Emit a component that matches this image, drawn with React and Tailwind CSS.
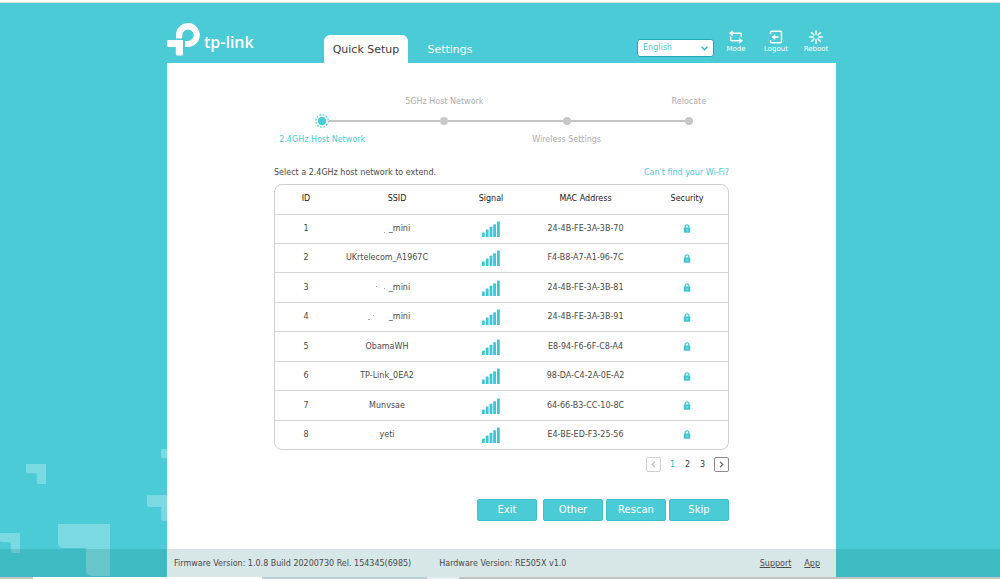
import { useState } from 'react';

const NETWORKS = [
  { id: 1, ssid: '_mini', marks: [[20, 8, 1]], mac: '24-4B-FE-3A-3B-70' },
  { id: 2, ssid: 'UKrtelecom_A1967C', mac: 'F4-B8-A7-A1-96-7C' },
  { id: 3, ssid: '_mini', marks: [[12, 3, 1], [20, 5, 1]], mac: '24-4B-FE-3A-3B-81' },
  { id: 4, ssid: '_mini', marks: [[4, 7, 2], [9, 3, 1]], mac: '24-4B-FE-3A-3B-91' },
  { id: 5, ssid: 'ObamaWH', mac: 'E8-94-F6-6F-C8-A4' },
  { id: 6, ssid: 'TP-Link_0EA2', mac: '98-DA-C4-2A-0E-A2' },
  { id: 7, ssid: 'Munvsae', mac: '64-66-B3-CC-10-8C' },
  { id: 8, ssid: 'yeti', mac: 'E4-BE-ED-F3-25-56' },
];

const STEPS = [
  { label: '2.4GHz Host Network', above: false },
  { label: '5GHz Host Network', above: true },
  { label: 'Wireless Settings', above: false },
  { label: 'Relocate', above: true },
];

function Logo() {
  return (
    <a href="#home" className="flex items-center gap-1 text-white">
      <svg width="33" height="33" viewBox="0 0 33 33" fill="currentColor" aria-hidden="true">
        <path d="M9 15.4V11a11.9 11.9 0 1 1 12 12.9h-3V18h3a5.700 5.700 0 1 0-5.700-5.700v1.700a1.400 1.400 0 0 1-1.400 1.400z" />
        <path d="M1.400 17.100H16v14.100a1.400 1.400 0 0 1-1.400 1.400h-4.400a1.400 1.400 0 0 1-1.400-1.400v-7.300H1.400A1.400 1.400 0 0 1 0 22.500v-4a1.400 1.400 0 0 1 1.400-1.400z" />
      </svg>
      <span className="pt-1 font-['Open_Sans',sans-serif] text-[16px] leading-5 font-semibold">tp-link</span>
    </a>
  );
}

function ModeIcon() {
  return (
    <svg width="16" height="14" viewBox="0 0 16 14" fill="none" stroke="currentColor" strokeWidth="1.500" strokeLinejoin="round" strokeLinecap="round">
      <path d="M4 3.200h8.300a1 1 0 0 1 1 1v2.600" />
      <path d="M12 10.800H3.700a1 1 0 0 1-1-1V7.200" />
      <path d="M4.200.900 1.400 3.200l2.800 2.300zM11.800 8.500l2.800 2.300-2.800 2.300z" fill="currentColor" strokeWidth="0.600" />
    </svg>
  );
}

function LogoutIcon() {
  return (
    <svg width="14" height="14" viewBox="0 0 14 14" fill="none" stroke="currentColor" strokeWidth="1.500">
      <path d="M1.500 4V2.600a1.400 1.400 0 0 1 1.400-1.400h8.200a1.400 1.400 0 0 1 1.400 1.400v8.800a1.400 1.400 0 0 1-1.400 1.400H2.900a1.400 1.400 0 0 1-1.400-1.400V10" />
      <path d="M5 7h4.500" />
      <path d="M6 4.600 3 7l3 2.400z" fill="currentColor" strokeWidth="0.500" />
    </svg>
  );
}

function RebootIcon() {
  return (
    <svg width="14" height="14" viewBox="0 0 14 14" fill="none" stroke="currentColor" strokeWidth="1.500" strokeLinecap="round">
      <path d="M7 .8v3.400M7 9.800v3.400M.8 7h3.400M9.800 7h3.400M2.600 2.600l2.400 2.400M9 9l2.400 2.400M11.400 2.600 9 5M5 9l-2.400 2.400" />
    </svg>
  );
}

function SignalIcon() {
  return (
    <svg width="18" height="16" viewBox="0 0 18 16" fill="#3fc6d3" role="img" aria-label="Strong signal" className="mx-auto">
      <rect x="0" y="11.500" width="2.800" height="4.500" rx="0.500" />
      <rect x="3.800" y="8.500" width="2.800" height="7.500" rx="0.500" />
      <rect x="7.600" y="5.800" width="2.800" height="10.200" rx="0.500" />
      <rect x="11.200" y="3.200" width="2.800" height="12.800" rx="0.500" />
      <rect x="15" y="0.500" width="2.800" height="15.500" rx="0.500" />
    </svg>
  );
}

function LockIcon() {
  return (
    <svg width="8" height="9" viewBox="0 0 8 9" fill="none" role="img" aria-label="Secured" className="mx-auto">
      <path d="M2.100 4V2.700a1.900 1.900 0 0 1 3.800 0V4" stroke="#4acbd6" strokeWidth="1.300" />
      <rect x="0.800" y="3.600" width="6.400" height="5.200" rx="0.700" fill="#3fc6d3" />
      <path d="M4 5.300v1.800" stroke="#fff" strokeOpacity="0.700" strokeWidth="0.900" />
    </svg>
  );
}

function Corner({ className }) {
  return (
    <svg viewBox="0 0 52 52" fill="#fff" fillOpacity="0.270" className={className} aria-hidden="true">
      <path d="M0 0h52v52H33a5 5 0 0 1-5-5V24H5a5 5 0 0 1-5-5z" />
    </svg>
  );
}

function Header() {
  const actions = [
    { label: 'Mode', Icon: ModeIcon },
    { label: 'Logout', Icon: LogoutIcon },
    { label: 'Reboot', Icon: RebootIcon },
  ];

  return (
    <header className="flex h-15 items-end">
      <div className="w-[157px] pb-[7px]">
        <Logo />
      </div>
      <nav className="flex items-end text-[11px] leading-[26px]">
        <a href="#quick" className="w-21 rounded-t-md bg-white pt-[2px] text-center text-[#3c3c3c]">Quick Setup</a>
        <a href="#settings" className="w-21 text-center text-white">Settings</a>
      </nav>
      <div className="ml-auto flex items-center pb-[6px]">
        <div className="relative mt-3 mr-[2px]">
          <select
            aria-label="Language"
            defaultValue="English"
            className="block h-[18px] w-[77px] appearance-none rounded-[3px] border border-[#1fa9b5] bg-white pl-[5px] text-[8px] leading-4 text-[#4acbd6]"
          >
            <option>English</option>
          </select>
          <svg width="7" height="5" viewBox="0 0 7 5" fill="none" stroke="#2fb9c6" strokeWidth="1.500" className="pointer-events-none absolute top-[7px] right-[6px]">
            <path d="M.6.800 3.500 3.700 6.400.800" />
          </svg>
        </div>
        {actions.map(({ label, Icon }) => (
          <button key={label} type="button" className="flex w-10 flex-col items-center gap-px text-[7px] leading-[9px] text-white">
            <Icon />
            {label}
          </button>
        ))}
      </div>
    </header>
  );
}

function Stepper() {
  return (
    <ol className="grid grid-cols-4 pr-[86px] pl-[94px] text-center leading-3">
      {STEPS.map((step, i) => (
        <li key={step.label} className={`grid grid-rows-[12px_26px_12px] ${i === 0 ? 'text-[#4acbd6]' : 'text-[#acacac]'}`}>
          <span>{step.above && step.label}</span>
          <span className="flex items-center">
            <span className={`h-[2px] flex-1 ${i === 0 ? '' : 'bg-[#c4c4c4]'}`} />
            {i === 0 ? (
              <svg width="14" height="14" viewBox="0 0 14 14">
                <circle cx="7" cy="7" r="4.200" fill="#4acbd6" />
                <circle cx="7" cy="7" r="6.200" fill="none" stroke="#4acbd6" strokeWidth="1.300" strokeDasharray="1.600 1.646" />
              </svg>
            ) : (
              <span className="size-2 rounded-full bg-[#c8c8c8]" />
            )}
            <span className={`h-[2px] flex-1 ${i === STEPS.length - 1 ? '' : 'bg-[#c4c4c4]'}`} />
          </span>
          <span>{!step.above && step.label}</span>
        </li>
      ))}
    </ol>
  );
}

function NetworkTable() {
  return (
    <div className="rounded-lg border border-[#cfcfcf]">
      <table className="h-[264px] w-full table-fixed border-collapse text-center text-[#4a4a4a]">
        <thead className="text-[#222]">
          <tr className="h-[29px]">
            <th className="w-[62px] font-normal">ID</th>
            <th className="w-[120px] font-normal">SSID</th>
            <th className="w-[68px] font-normal">Signal</th>
            <th className="w-[121px] font-normal">MAC Address</th>
            <th className="font-normal">Security</th>
          </tr>
        </thead>
        <tbody>
          {NETWORKS.map((n) => (
            <tr key={n.id} className="border-t border-[#d4d4d4]">
              <td>{n.id}</td>
              <td className="pr-5">
                <span className="flex items-center justify-center">
                  {n.marks && (
                    <svg width="25" height="10" viewBox="0 0 25 10" fill="#a4acb6" aria-hidden="true">
                      {n.marks.map(([x, y, size]) => (
                        <rect key={x} x={x} y={y} width={size} height="1" />
                      ))}
                    </svg>
                  )}
                  {n.ssid}
                </span>
              </td>
              <td><SignalIcon /></td>
              <td>{n.mac}</td>
              <td><LockIcon /></td>
            </tr>
          ))}
        </tbody>
      </table>
    </div>
  );
}

function Pager() {
  const [page, setPage] = useState(1);
  const arrow = 'flex size-[15px] items-center justify-center rounded-[2px] border';

  return (
    <div className="flex items-center justify-end text-[#3c3c3c]">
      <button
        type="button"
        aria-label="Previous page"
        onClick={() => setPage(Math.max(1, page - 1))}
        className={`${arrow} mr-1 ${page === 1 ? 'border-[#cfcfcf] text-[#bdbdbd]' : 'border-[#8c8c8c] text-[#6a6a6a]'}`}
      >
        <svg width="5" height="7" viewBox="0 0 5 7" fill="none" stroke="currentColor" strokeWidth="1.200"><path d="M4 .8 1.200 3.500 4 6.200" /></svg>
      </button>
      {[1, 2, 3].map((n) => (
        <button key={n} type="button" onClick={() => setPage(n)} className={`w-[15px] ${n === page ? 'text-[#2fbfcc]' : ''}`}>
          {n}
        </button>
      ))}
      <button
        type="button"
        aria-label="Next page"
        onClick={() => setPage(Math.min(3, page + 1))}
        className={`${arrow} ml-1 ${page === 3 ? 'border-[#cfcfcf] text-[#bdbdbd]' : 'border-[#8c8c8c] text-[#6a6a6a]'}`}
      >
        <svg width="5" height="7" viewBox="0 0 5 7" fill="none" stroke="currentColor" strokeWidth="1.200"><path d="M1 .8 3.800 3.500 1 6.200" /></svg>
      </button>
    </div>
  );
}

export default function App() {
  return (
    <div className="relative flex min-h-screen flex-col overflow-hidden bg-[#4acbd6] font-['DejaVu_Sans',sans-serif] text-[8px] leading-3">
      <div className="h-[3px] border-b border-[#d5dfe2] bg-white" />

      {/* Background pattern */}
      <Corner className="absolute bottom-[95px] left-[26px] size-5" />
      <Corner className="absolute bottom-[26px] left-0 size-5" />
      <Corner className="absolute bottom-[3px] left-[58px] size-[52px]" />
      <Corner className="absolute bottom-[58px] left-[147px] size-[26px]" />
      <Corner className="absolute bottom-[110px] left-[161px] size-5" />

      <div className="relative flex flex-1 justify-center pl-[3px]">
        <div className="flex w-full max-w-[669px] flex-col">
          <Header />
          <main className="flex-1 bg-white pt-[33px] pb-[56px]">
            <Stepper />
            <div className="px-[107px] pt-[21px]">
              <div className="mb-[5px] flex justify-between">
                <p className="text-[#4a4a4a]">Select a 2.4GHz host network to extend.</p>
                <a href="#help" className="text-[#4acbd6]">Can&apos;t find your Wi-Fi?</a>
              </div>
              <NetworkTable />
              <div className="mt-[7px]">
                <Pager />
              </div>
              <div className="mt-[27px] flex justify-end gap-[3px]">
                {['Exit', 'Other', 'Rescan', 'Skip'].map((label) => (
                  <button
                    key={label}
                    type="button"
                    className="h-[22px] w-[60px] rounded-[2px] border border-[#3cc0cc] bg-[#4acbd6] text-[10px] text-white first:mr-[3px]"
                  >
                    {label}
                  </button>
                ))}
              </div>
            </div>
          </main>
        </div>
      </div>

      <footer className="absolute inset-x-0 bottom-0">
        <div className="flex justify-center bg-[rgba(0,94,94,0.155)] pl-[3px]">
          <div className="flex h-7 w-full max-w-[669px] items-center pt-[2px] pr-4 pl-[7px] text-[#4a4a4a]">
            <span className="mr-[28px]">Firmware Version: 1.0.8 Build 20200730 Rel. 154345(6985)</span>
            <span>Hardware Version: RE505X v1.0</span>
            <a href="#support" className="ml-auto underline">Support</a>
            <a href="#app" className="ml-[13px] underline">App</a>
          </div>
        </div>
        <div className="flex h-[2px] bg-[#c4c4c4]">
          <div className="w-[33px]" />
          <div className="w-[229px] bg-white" />
          <div className="w-[165px] bg-[#b9ced1]" />
          <div className="w-8 bg-[#e4eeef]" />
        </div>
      </footer>
    </div>
  );
}
